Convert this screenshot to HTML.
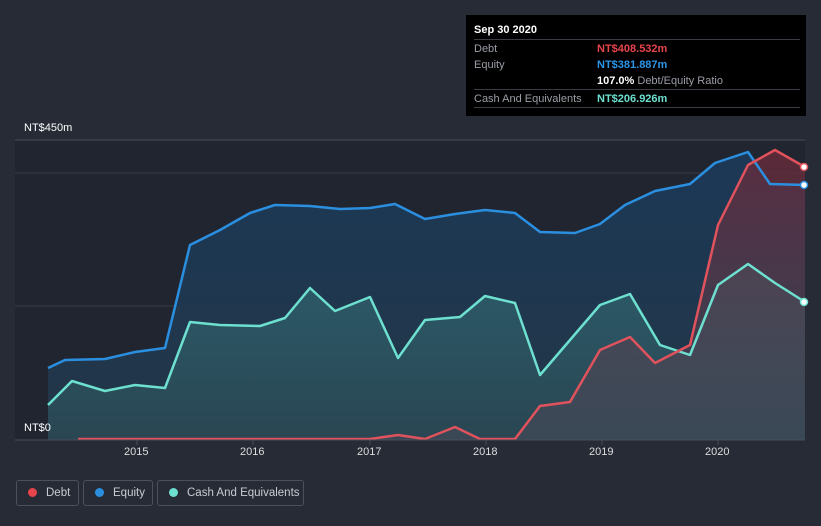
<!DOCTYPE html>
<html><head><meta charset="utf-8"><style>
html,body{margin:0;width:821px;height:526px;background:#262b36;font-family:"Liberation Sans",sans-serif;overflow:hidden;position:relative}
.t{position:absolute;font-size:11px;color:#fff}
.tip{position:absolute;left:466px;top:15px;width:340px;height:101px;background:#000;font-size:11px}
.row{position:absolute;left:8px;width:326px;height:18px;border-top:1px solid #3a3d44;line-height:18px;color:#9a9ea6}
.lg{position:absolute;top:480px;height:26px;border:1px solid #4a505c;border-radius:3px;color:#c8ccd2;font-size:11.5px;line-height:24px;box-sizing:border-box;white-space:nowrap;overflow:hidden}
.dot{display:inline-block;width:9px;height:9px;border-radius:50%;margin:0 9px 0 11px;vertical-align:-1px}
</style></head><body>
<svg width="821" height="526" style="position:absolute;left:0;top:0">
<defs>
<linearGradient id="ge" x1="0" y1="0" x2="0" y2="1"><stop offset="0" stop-color="#1b3a5a" stop-opacity=".9"/><stop offset="1" stop-color="#23384a" stop-opacity=".9"/></linearGradient>
<linearGradient id="gc" x1="0" y1="0" x2="0" y2="1"><stop offset="0" stop-color="#2f6470" stop-opacity=".8"/><stop offset="1" stop-color="#2c4a55" stop-opacity=".8"/></linearGradient>
<linearGradient id="gd" x1="0" y1="0" x2="0" y2="1"><stop offset="0" stop-color="#6a2a3a" stop-opacity=".8"/><stop offset="1" stop-color="#4a4a5a" stop-opacity=".5"/></linearGradient>
</defs>
<rect x="15" y="140" width="790" height="300" fill="#1e222b" opacity=".6"/>
<line x1="15" y1="140" x2="805" y2="140" stroke="#4a4e58"/>
<line x1="15" y1="173" x2="805" y2="173" stroke="#353a45"/>
<line x1="15" y1="306" x2="805" y2="306" stroke="#353a45"/>
<polygon fill="url(#ge)" points="48,440 48,368 65,360 105,359 135,352 165,348 190,245 220,230 250,213 275,205 310,206 340,209 370,208 395,204 425,219 455,214 485,210 515,213 540,232 575,233 600,224 625,205 655,191 690,184 715,163 748,152 770,184 805,185 805,440"/>
<polygon fill="url(#gc)" points="48,440 48,405 72,381 105,391 135,385 165,388 190,322 220,325 260,326 285,318 310,288 335,311 370,297 398,358 425,320 460,317 485,296 515,303 540,375 570,340 600,305 630,294 660,345 690,355 718,285 748,264 775,283 805,302 805,440"/>
<polygon fill="url(#gd)" points="78,440 78,439 370,439 398,435 425,439 455,427 480,439 515,439 540,406 570,402 600,350 630,337 655,363 690,345 718,225 748,165 775,150 805,167 805,440"/>
<polyline fill="none" stroke="#2b8fe0" stroke-width="2.5" stroke-linejoin="round" points="48,368 65,360 105,359 135,352 165,348 190,245 220,230 250,213 275,205 310,206 340,209 370,208 395,204 425,219 455,214 485,210 515,213 540,232 575,233 600,224 625,205 655,191 690,184 715,163 748,152 770,184 805,185"/>
<polyline fill="none" stroke="#6de0d0" stroke-width="2.5" stroke-linejoin="round" points="48,405 72,381 105,391 135,385 165,388 190,322 220,325 260,326 285,318 310,288 335,311 370,297 398,358 425,320 460,317 485,296 515,303 540,375 570,340 600,305 630,294 660,345 690,355 718,285 748,264 775,283 805,302"/>
<polyline fill="none" stroke="#e0525c" stroke-width="2.5" stroke-linejoin="round" points="78,439 370,439 398,435 425,439 455,427 480,439 515,439 540,406 570,402 600,350 630,337 655,363 690,345 718,225 748,165 775,150 805,167"/>
<line x1="15" y1="440" x2="805" y2="440" stroke="#4a4e58"/>
<g stroke="#4a4e58"><line x1="137" y1="440" x2="137" y2="445"/><line x1="253" y1="440" x2="253" y2="445"/><line x1="370" y1="440" x2="370" y2="445"/><line x1="486" y1="440" x2="486" y2="445"/><line x1="602" y1="440" x2="602" y2="445"/><line x1="718" y1="440" x2="718" y2="445"/></g>
<circle cx="804" cy="167" r="3.5" fill="#fff" stroke="#e0525c" stroke-width="1.5"/>
<circle cx="804" cy="185" r="3.5" fill="#fff" stroke="#2b8fe0" stroke-width="1.5"/>
<circle cx="804" cy="302" r="3.5" fill="#fff" stroke="#6de0d0" stroke-width="1.5"/>
</svg>
<div class="t" style="left:24px;top:122px">NT$450m</div>
<div class="t" style="left:24px;top:422px">NT$0</div>
<div class="t" style="left:124px;top:446px;color:#ddd">2015</div>
<div class="t" style="left:240px;top:446px;color:#ddd">2016</div>
<div class="t" style="left:357px;top:446px;color:#ddd">2017</div>
<div class="t" style="left:473px;top:446px;color:#ddd">2018</div>
<div class="t" style="left:589px;top:446px;color:#ddd">2019</div>
<div class="t" style="left:705px;top:446px;color:#ddd">2020</div>
<div class="tip">
<div style="position:absolute;left:8px;top:9px;color:#fff;font-weight:bold">Sep 30 2020</div>
<div class="row" style="top:24px">Debt<span style="position:absolute;left:123px;color:#e8444c;font-weight:bold">NT$408.532m</span></div>
<div class="row" style="top:41px;border-top:none">Equity<span style="position:absolute;left:123px;color:#2b95e8;font-weight:bold">NT$381.887m</span></div>
<div class="row" style="top:57px;border-top:none"><span style="position:absolute;left:123px;white-space:nowrap"><b style="color:#fff">107.0%</b> Debt/Equity Ratio</span></div>
<div class="row" style="top:74px">Cash And Equivalents<span style="position:absolute;left:123px;color:#6de0d0;font-weight:bold">NT$206.926m</span></div>
<div class="row" style="top:92px;height:0"></div>
</div>
<div class="lg" style="left:16px;width:63px"><span class="dot" style="background:#e8444c"></span>Debt</div>
<div class="lg" style="left:83px;width:70px"><span class="dot" style="background:#2b8fe0"></span>Equity</div>
<div class="lg" style="left:157px;width:147px"><span class="dot" style="background:#6de0d0"></span>Cash And Equivalents</div>
</body></html>
